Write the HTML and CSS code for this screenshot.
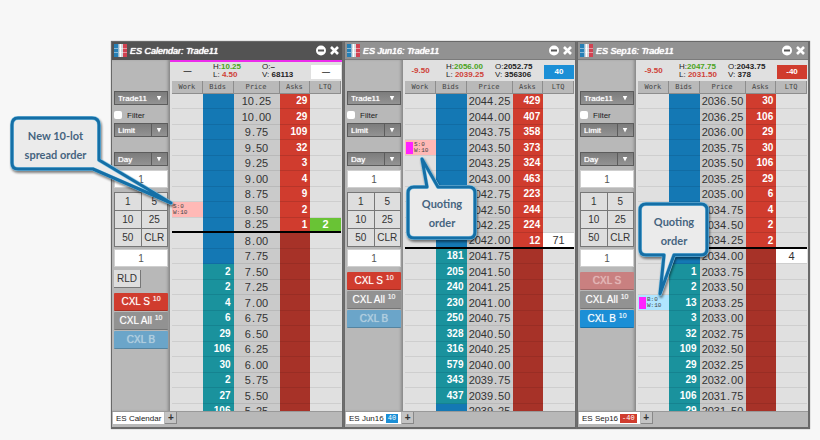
FILE: index.html
```
<!DOCTYPE html>
<html lang="en">
<head>
<meta charset="utf-8">
<title>MD Trader: ES Calendar, ES Jun16, ES Sep16</title>
<link rel="stylesheet" href="styles.css">
</head>
<body>
<main class="desk" id="desk"></main>

<aside class="callout callout-spread">
  <svg class="bubble" viewBox="0 0 164 92" aria-hidden="true">
    <path class="bubble-glow" d="M8 2H82Q89 2 89 9V44L161 87L83 53H8Q2 53 2 47V9Q2 2 8 2Z"/>
    <path class="bubble-line" d="M8 2H82Q89 2 89 9V44L161 87L83 53H8Q2 53 2 47V9Q2 2 8 2Z"/>
  </svg>
  <p class="callout-text">New 10-lot<br>spread order</p>
</aside>

<aside class="callout callout-jun">
  <svg class="bubble" viewBox="0 0 72 86" aria-hidden="true">
    <path class="bubble-glow" d="M8 31H21L16 3L32 31H63Q69 31 69 37V76Q69 82 63 82H8Q2 82 2 76V37Q2 31 8 31Z"/>
    <path class="bubble-line" d="M8 31H21L16 3L32 31H63Q69 31 69 37V76Q69 82 63 82H8Q2 82 2 76V37Q2 31 8 31Z"/>
  </svg>
  <p class="callout-text">Quoting<br>order</p>
</aside>

<aside class="callout callout-sep">
  <svg class="bubble" viewBox="0 0 72 98" aria-hidden="true">
    <path class="bubble-glow" d="M8 2H63Q69 2 69 8V47Q69 53 63 53H36L22 92L26 53H8Q2 53 2 47V8Q2 2 8 2Z"/>
    <path class="bubble-line" d="M8 2H63Q69 2 69 8V47Q69 53 63 53H36L22 92L26 53H8Q2 53 2 47V8Q2 2 8 2Z"/>
  </svg>
  <p class="callout-text">Quoting<br>order</p>
</aside>

<script src="app.js"></script>
</body>
</html>
```
FILE: styles.css
```
* {
  box-sizing: border-box;
}

body {
  margin: 0;
  background: #f7f7f7;
  font-family: "Liberation Sans", Arial, sans-serif;
  font-size: 10px;
  color: #333;
}

button,
input,
select {
  margin: 0;
  padding: 0;
  border: 0;
  border-radius: 0;
  font: inherit;
  color: inherit;
}

.desk {
  display: grid;
  grid-template-columns: repeat(3, 1fr);
  padding: 41px 10px 10px 111px;
}

/* Window frame */
.window {
  border: solid #696969;
  border-width: 1px 2px 2px 1px;
  background: #b8b8b8;
  box-shadow: 0 0 1px #888;
}

.titlebar {
  display: flex;
  align-items: center;
  gap: 3px;
  height: 18px;
  padding: 0 2px;
  background: #929292;
  border-bottom: 1px solid #7b7b7b;
  color: #fff;
}

.active .titlebar {
  background: #535353;
  border-color: #535353;
}

.logo {
  width: 13px;
  height: 13px;
}

.title {
  flex: 1;
  margin: 0;
  font-size: 9px;
  font-weight: normal;
  font-style: italic;
  text-shadow: 0 0 1px #fff, 0 0 1px #fff;
  white-space: nowrap;
}

.title-button {
  display: flex;
  background: none;
}

.title-button svg {
  width: 11px;
  height: 11px;
}

.content {
  display: flex;
}

/* Order entry column */
.entry {
  display: flex;
  flex-direction: column;
  width: 58px;
  padding: 31px 2px 0;
  box-shadow: inset -3px 0 3px -1px #888;
}

.picker {
  display: grid;
  grid-template-columns: 1fr 16px;
  align-items: center;
  height: 14px;
  border: 1px solid #5c5c5c;
  background: linear-gradient(#7c7c7c, #939393);
}

.picker select {
  grid-area: 1 / 1 / 2 / 3;
  width: 100%;
  height: 12px;
  padding: 0 3px;
  appearance: none;
  background: none;
  font-size: 8px;
  color: #fff;
  text-shadow: 0 0 1px #fff;
}

.picker::after {
  content: "";
  grid-area: 1 / 2;
  justify-self: center;
  width: 5px;
  height: 5px;
  background: #fff;
  clip-path: polygon(0 0, 100% 0, 50% 100%);
  pointer-events: none;
}

.split select {
  background: linear-gradient(#5c5c5c, #5c5c5c) right 15px top / 1px 100% no-repeat;
}

.filter {
  display: flex;
  align-items: center;
  gap: 5px;
  height: 8px;
  margin: 6px 0 4px;
  font-size: 8px;
  color: #222;
}

.filter input {
  width: 8px;
  height: 8px;
  appearance: none;
  border-radius: 2px;
  background: #fff;
}

.tif {
  margin: 15px 0 4px;
}

.quantity {
  width: 100%;
  height: 18px;
  border: 1px solid #cfcfcf;
  background: #fff;
  color: #555;
  text-align: center;
}

.keypad {
  display: grid;
  grid-template-columns: 1fr 1fr;
  grid-auto-rows: 17px;
  gap: 1px;
  margin: 4px 0 2px;
  padding: 1px;
  background: #777;
}

.keypad button,
.reload {
  background: #dedede;
  color: #333;
}

.reload {
  align-self: flex-start;
  width: 27px;
  height: 18px;
  margin-top: 3px;
  border: solid #777;
  border-width: 0 1px 1px 0;
}

.cancels {
  display: grid;
  grid-auto-rows: 18px;
  gap: 1px;
  margin-top: 5px;
}

.cancel {
  border-bottom: 1px solid #0003;
  border-radius: 1px;
  background: #929292;
  color: #fff;
  text-shadow: 0 0 1px #fff8;
  white-space: nowrap;
}

.cancel sup {
  font-size: 7px;
  line-height: 1;
}

.cancel.sell {
  background: #d03c2e;
}

.cancel.buy {
  background: #1b8fd6;
}

.cancel.sell:disabled {
  background: #c98080;
  color: #e3b6b6;
}

.cancel.buy:disabled {
  background: #6ba5c9;
  color: #b1cede;
}

/* Market data column */
.market {
  flex: 1;
  min-width: 0;
  padding: 0 1px 0 2px;
  background: #e0e0e0;
}

.active .market {
  background: linear-gradient(#ec2bec, #ec2bec) top / 100% 2px no-repeat #e0e0e0;
}

.stats {
  display: grid;
  grid-template-columns: 31px 10px 49px 1fr 30px;
  align-items: center;
  height: 21px;
  font-size: 8px;
  line-height: 8px;
  color: #222;
  white-space: nowrap;
}

.stats p {
  margin: 0;
}

.change {
  text-align: center;
}

.range {
  grid-column: 3;
}

.high,
.up {
  color: #4aa320;
}

.low,
.down {
  color: #cf4238;
}

.position {
  height: 14px;
  margin-top: 3px;
  background: #fff;
  line-height: 14px;
  text-align: center;
  font-weight: bold;
}

.long {
  background: #1b8fd6;
  color: #fff;
}

.short {
  background: #d03c2e;
  color: #fff;
}

.ladder-view {
  height: 330px;
  overflow: hidden;
}

.ladder {
  width: 100%;
  border-collapse: separate;
  border-spacing: 0;
  table-layout: fixed;
}

.ladder th,
.ladder td {
  padding: 0;
  white-space: nowrap;
}

.ladder th {
  height: 13px;
  border: solid #8d8d8d;
  border-width: 0 1px 1px 0;
  background: #b9b9b9;
  font: 7px "DejaVu Sans Mono", monospace;
  color: #444;
}

.price-col {
  width: 46px;
}

.ladder tbody tr {
  height: 15px;
}

.ladder tbody tr:nth-child(even) {
  height: 16px;
}

.ladder td {
  border-bottom: 1px solid #cecece;
  line-height: 14px;
  text-align: right;
}

.ladder .bid,
.ladder .ask {
  padding-right: 3px;
  font-weight: bold;
  color: #fff;
}

.ladder .bid {
  background: #1478b4;
  border-color: #116ca4;
}

.ladder .resting {
  background: #1a929d;
  border-color: #158390;
}

.ladder .price {
  background: #cacaca;
  border-color: #b9b9b9;
  font-size: 11px;
  text-align: center;
}

.point {
  display: inline-block;
  width: 5px;
  text-align: center;
}

.ladder .ask {
  background: #a73228;
  border-color: #992d24;
}

.ladder .offered {
  background: #d03c2e;
  border-color: #b73529;
}

.ladder .last {
  background: #fff;
  font-size: 11px;
  text-align: center;
}

.ladder .uptick {
  background: #69c335;
  color: #fff;
  font-weight: bold;
}

.ladder .inside td {
  border-bottom: 2px solid #000;
  line-height: 13px;
}

.order {
  display: flex;
  align-items: center;
  gap: 1px;
  height: 14px;
  padding-left: 1px;
  font: 6px/6px "Liberation Mono", monospace;
  color: #444;
  text-align: left;
}

.ladder .sell-order {
  background: #ffb9b6;
}

.ladder .buy-order {
  background: #b0e5ff;
}

.quoting::before {
  content: "";
  width: 7px;
  height: 12px;
  background: #ff22ff;
}

/* Tabs */
.tabs {
  display: flex;
  align-items: stretch;
  gap: 1px;
  height: 16px;
  padding: 0 2px 3px 1px;
  border-top: 1px solid #999;
}

.tab {
  display: flex;
  align-items: center;
  gap: 2px;
  padding: 0 3px;
  background: #fff;
  font-size: 8px;
  color: #222;
  white-space: nowrap;
}

.badge {
  padding: 0 2px;
  font: 7px/9px "Liberation Mono", monospace;
}

.add-tab {
  width: 12px;
  border: solid #888;
  border-width: 0 1px 1px 0;
  background: #c4c4c4;
  font-weight: bold;
  line-height: 10px;
}

/* Callouts float over the trading windows */
.callout {
  position: absolute;
  display: grid;
}

.callout-spread {
  left: 10px;
  top: 116px;
  width: 164px;
  height: 92px;
}

.callout-jun {
  left: 406px;
  top: 156px;
  width: 72px;
  height: 86px;
}

.callout-sep {
  left: 638px;
  top: 202px;
  width: 72px;
  height: 98px;
}

.bubble {
  grid-area: 1 / 1;
  width: 100%;
  height: 100%;
  overflow: visible;
  filter: drop-shadow(1px 2px 1px #0007);
}

.bubble path {
  stroke-linejoin: round;
}

.bubble-glow {
  fill: #ebebeb;
  stroke: #8cc9e6;
  stroke-width: 4;
}

.bubble-line {
  fill: none;
  stroke: #156fa6;
  stroke-width: 3;
}

.callout-text {
  grid-area: 1 / 1;
  z-index: 1;
  margin: 0;
  padding-top: 10px;
  font: bold 11px/19px Lato, sans-serif;
  color: #46647f;
  text-align: center;
}

.callout-spread .callout-text {
  width: 91px;
}

.callout-jun .callout-text {
  padding-top: 38px;
}
```
FILE: app.js
```
const markets = [
  {
    name: "ES Calendar", active: true, reload: true, start: 10.25,
    change: "—", high: "10.25", low: "4.50", open: "–", volume: "68113",
    position: "—", positionClass: "",
    asks: [29, 29, 109, 32, 3, 4, 9, 2, 1],
    bids: [2, 2, 4, 6, 29, 106, 30, 2, 27, 106], firstBid: 11,
    last: { row: 8, text: "2", cls: "uptick" },
    order: { row: 7, side: "S", cls: "sell-order", quoting: false },
    sell: 10, buy: 0
  },
  {
    name: "ES Jun16", start: 2044.25,
    change: "-9.50", high: "2056.00", low: "2039.25", open: "2052.75", volume: "356306",
    position: "40", positionClass: "long",
    asks: [429, 407, 358, 373, 324, 463, 223, 244, 224, 12],
    bids: [181, 205, 240, 230, 250, 328, 316, 579, 343, 437], firstBid: 10,
    last: { row: 9, text: "71", cls: "" },
    order: { row: 3, side: "S", cls: "sell-order", quoting: true },
    sell: 10, buy: 0
  },
  {
    name: "ES Sep16", start: 2036.5,
    change: "-9.50", high: "2047.75", low: "2031.50", open: "2043.75", volume: "378",
    position: "-40", positionClass: "short",
    asks: [30, 106, 29, 30, 106, 29, 6, 4, 2, 2],
    bids: [1, 2, 13, 3, 32, 109, 29, 29, 106, 29], firstBid: 11,
    last: { row: 10, text: "4", cls: "" },
    order: { row: 13, side: "B", cls: "buy-order", quoting: true },
    sell: 0, buy: 10
  }
];

function ladderRow(m, i) {
  const [whole, cents] = (m.start - i * 0.25).toFixed(2).split(".");
  const ask = m.asks[i];
  const bid = m.bids[i - m.firstBid];
  const work = m.order.row === i
    ? `<td class="${m.order.cls}"><div class="order ${m.order.quoting ? "quoting" : ""}"><span>${m.order.side}:0<br>W:10</span></div></td>`
    : "<td></td>";
  const last = m.last.row === i ? `<td class="last ${m.last.cls}">${m.last.text}</td>` : "<td></td>";
  return `<tr class="${i === m.asks.length - 1 ? "inside" : ""}">${work}
    <td class="bid ${bid ? "resting" : ""}">${bid || ""}</td>
    <td class="price">${whole}<span class="point">.</span>${cents}</td>
    <td class="ask ${ask ? "offered" : ""}">${ask || ""}</td>${last}</tr>`;
}

function cancelButton(label, cls, count) {
  return `<button class="cancel ${cls}" ${count ? "" : "disabled"}>CXL ${label}${count ? ` <sup>${count}</sup>` : ""}</button>`;
}

function windowMarkup(m) {
  const rows = Array.from({ length: 21 }, (_, i) => ladderRow(m, i)).join("");
  const keys = ["1", "5", "10", "25", "50", "CLR"].map(k => `<button>${k}</button>`).join("");
  const badge = m.positionClass ? `<span class="badge ${m.positionClass}">${m.position}</span>` : "";
  return `<section class="window ${m.active ? "active" : ""}">
  <header class="titlebar">
    <svg class="logo" viewBox="0 0 13 13" aria-hidden="true">
      <path fill="#267fb5" d="M0 0h4v13H0z"/><path fill="#d4dade" d="M4 0h5v13H4z"/><path fill="#d14352" d="M9 0h4v13H9z"/>
      <path stroke="#fff" stroke-opacity=".45" d="M0 4.5h13M0 8.5h13"/>
      <path stroke="#8fb9d2" d="M4.5 0v13"/><path stroke="#fff" d="M6.5 0v13"/>
    </svg>
    <h2 class="title">${m.name}: Trade11</h2>
    <button class="title-button" aria-label="Minimize"><svg viewBox="0 0 11 11"><circle cx="6" cy="5.5" r="5" fill="#fff"/><path d="M3 5.5h6" stroke="#555" stroke-width="2"/></svg></button>
    <button class="title-button" aria-label="Close"><svg viewBox="0 0 11 11"><path d="M2 2l7 7M9 2l-7 7" stroke="#fff" stroke-width="2.6"/></svg></button>
  </header>
  <div class="content">
    <div class="entry">
      <label class="picker"><select aria-label="Account"><option>Trade11</option></select></label>
      <label class="filter"><input type="checkbox">Filter</label>
      <label class="picker split"><select aria-label="Order type"><option>Limit</option></select></label>
      <label class="picker split tif"><select aria-label="Time in force"><option>Day</option></select></label>
      <input class="quantity" aria-label="Quantity" value="1">
      <div class="keypad">${keys}</div>
      <input class="quantity" aria-label="Second quantity" value="1">
      ${m.reload ? '<button class="reload">RLD</button>' : ""}
      <div class="cancels">${cancelButton("S", "sell", m.sell)}${cancelButton("All", "", 10)}${cancelButton("B", "buy", m.buy)}</div>
    </div>
    <div class="market">
      <div class="stats">
        <strong class="change ${m.change.length > 1 ? "down" : ""}">${m.change}</strong>
        <p class="range">H:<strong class="high">${m.high}</strong><br>L: <strong class="low">${m.low}</strong></p>
        <p>O:<strong>${m.open}</strong><br>V: <strong>${m.volume}</strong></p>
        <span class="position ${m.positionClass}">${m.position}</span>
      </div>
      <div class="ladder-view">
        <table class="ladder">
          <thead><tr><th>Work</th><th>Bids</th><th class="price-col">Price</th><th>Asks</th><th>LTQ</th></tr></thead>
          <tbody>${rows}</tbody>
        </table>
      </div>
    </div>
  </div>
  <footer class="tabs"><span class="tab">${m.name}${badge}</span><button class="add-tab" aria-label="Add tab">+</button></footer>
</section>`;
}

document.getElementById("desk").innerHTML = markets.map(windowMarkup).join("");
```
